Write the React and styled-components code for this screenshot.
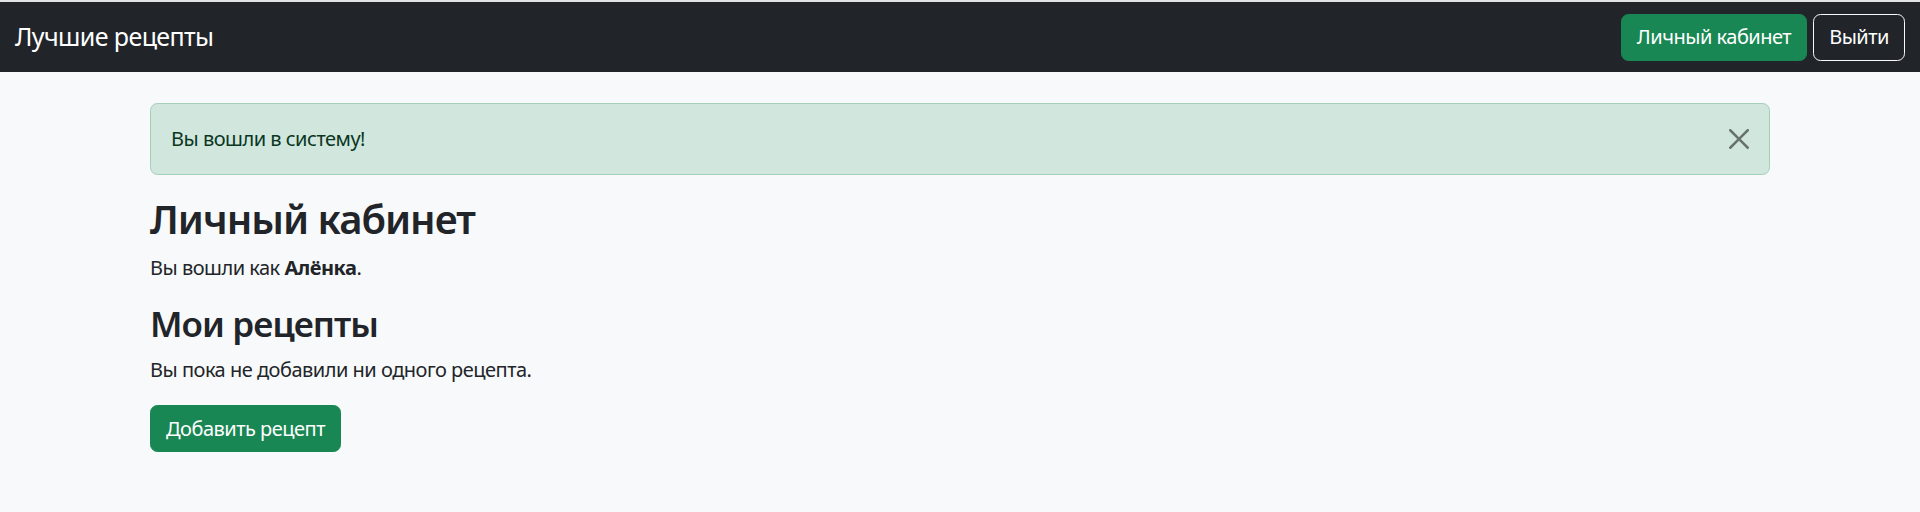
import React, { useState } from "react"
import styled, { createGlobalStyle } from "styled-components"

const GlobalStyle = createGlobalStyle`
  html, body {
    margin: 0;
    padding: 0;
  }
  body {
    background: #f8f9fa;
    color: #212529;
    font-family: "Noto Sans", "Open Sans", sans-serif;
    font-size: 20px;
    line-height: 1.5;
    letter-spacing: -0.5px;
    border-top: 2px solid #e2e3e5;
  }
  * {
    box-sizing: border-box;
  }
`

function CloseIcon() {
  return (
    <svg width="20" height="20" viewBox="0 0 16 16" fill="#000">
      <path d="M.293.293a1 1 0 0 1 1.414 0L8 6.586 14.293.293a1 1 0 1 1 1.414 1.414L9.414 8l6.293 6.293a1 1 0 0 1-1.414 1.414L8 9.414l-6.293 6.293a1 1 0 0 1-1.414-1.414L6.586 8 .293 1.707a1 1 0 0 1 0-1.414z" />
    </svg>
  )
}

function App() {
  const [showAlert, setShowAlert] = useState(true)

  return (
    <>
      <GlobalStyle />
      <Navbar>
        <Brand href="#">Лучшие рецепты</Brand>
        <NavActions>
          <Button variant="success">Личный кабинет</Button>
          <Button variant="outline">Выйти</Button>
        </NavActions>
      </Navbar>
      <Container>
        {showAlert && (
          <Alert>
            Вы вошли в систему!
            <CloseButton aria-label="Close" onClick={() => setShowAlert(false)}>
              <CloseIcon />
            </CloseButton>
          </Alert>
        )}
        <Heading>Личный кабинет</Heading>
        <Text>
          Вы вошли как <b>Алёнка</b>.
        </Text>
        <SubHeading>Мои рецепты</SubHeading>
        <Text>Вы пока не добавили ни одного рецепта.</Text>
        <Button variant="success">Добавить рецепт</Button>
      </Container>
    </>
  )
}

export default App

const Navbar = styled.nav`
  display: flex;
  align-items: center;
  justify-content: space-between;
  height: 70px;
  padding: 10px 15px;
  background: #212529;
`
const Brand = styled.a`
  color: #fff;
  font-size: 25px;
  line-height: 1.5;
  letter-spacing: -0.6px;
  text-decoration: none;
`
const NavActions = styled.div`
  display: flex;
  gap: 6px;
`
const Button = styled.button`
  display: inline-block;
  font-family: inherit;
  font-size: 20px;
  line-height: 30px;
  letter-spacing: -0.5px;
  padding: 7.5px 15px;
  border-radius: 7.5px;
  cursor: pointer;
  color: #fff;
  border: 1.25px solid ${(p) => (p.variant === "outline" ? "#f8f9fa" : "#198754")};
  background: ${(p) => (p.variant === "outline" ? "transparent" : "#198754")};
`
const Container = styled.main`
  max-width: 1650px;
  margin: 31px auto 0;
  padding: 0 15px;
`
const Alert = styled.div`
  position: relative;
  padding: 20px 60px 20px 20px;
  margin-bottom: 20px;
  background: #d1e7dd;
  border: 1px solid #a3cfbb;
  border-radius: 7.5px;
  color: #0a3622;
  line-height: 30px;
`
const CloseButton = styled.button`
  position: absolute;
  top: 0;
  right: 0;
  height: 100%;
  padding: 0 20px;
  display: flex;
  align-items: center;
  background: none;
  border: 0;
  opacity: 0.5;
  cursor: pointer;
`
const Heading = styled.h2`
  margin: 0 0 10px;
  font-size: 40px;
  font-weight: 600;
  line-height: 1.2;
  letter-spacing: -1px;
`
const SubHeading = styled.h3`
  margin: 0 0 10px;
  font-size: 35px;
  font-weight: 600;
  line-height: 1.2;
  letter-spacing: -0.9px;
`
const Text = styled.p`
  margin: 0 0 20px;
  b {
    font-weight: 700;
  }
`
